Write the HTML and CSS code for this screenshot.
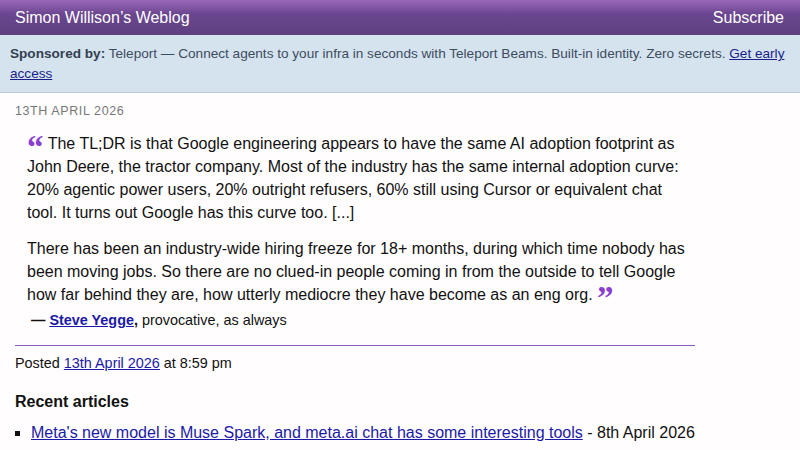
FILE: index.html
```html
<!DOCTYPE html>
<html>
<head>
<meta charset="utf-8">
<link rel="stylesheet" href="styles.css">
</head>
<body>
<header class="smallhead">
  <a class="site-title" href="#">Simon Willison’s Weblog</a>
  <a class="subscribe" href="#">Subscribe</a>
</header>
<div class="sponsor">
  <strong>Sponsored by:</strong> Teleport — Connect agents to your infra in seconds with Teleport Beams. Built-in identity. Zero secrets. <a href="#">Get early access</a>
</div>
<main class="content">
  <div class="date">13th April 2026</div>
  <blockquote class="quote">
    <p><span class="qmark">“</span> The TL;DR is that Google engineering appears to have the same AI adoption footprint as John Deere, the tractor company. Most of the industry has the same internal adoption curve: 20% agentic power users, 20% outright refusers, 60% still using Cursor or equivalent chat tool. It turns out Google has this curve too. [...]</p>
    <p>There has been an industry-wide hiring freeze for 18+ months, during which time nobody has been moving jobs. So there are no clued-in people coming in from the outside to tell Google how far behind they are, how utterly mediocre they have become as an eng org. <span class="qmark">”</span></p>
  </blockquote>
  <p class="cite"><strong>— <a href="#">Steve Yegge</a>,</strong> provocative, as always</p>
  <p class="posted">Posted <a href="#">13th April 2026</a> at 8:59 pm</p>
  <h3 class="recent">Recent articles</h3>
  <ul class="articles">
    <li><a href="#">Meta's new model is Muse Spark, and meta.ai chat has some interesting tools</a> - 8th April 2026</li>
  </ul>
</main>
</body>
</html>
```
FILE: styles.css
```css
html, body {
  margin: 0;
  padding: 0;
}
body {
  background: #fffdfe;
  font-family: "Liberation Sans", Arial, sans-serif;
  color: #111;
}
a {
  color: #1a1aa6;
}
.smallhead {
  height: 35px;
  box-sizing: border-box;
  padding: 0 16px 0 15px;
  display: flex;
  align-items: center;
  justify-content: space-between;
  background: linear-gradient(to bottom, #9b67b9 0px, #6b4690 14px, #5e3f7f 35px);
}
.smallhead a {
  color: #fff;
  text-decoration: none;
  font-size: 16px;
}
.sponsor {
  background: #d5e3ef;
  border-bottom: 1px solid #b8c9da;
  padding: 9px 10px 8px 10px;
  font-size: 13.6px;
  line-height: 20px;
  color: #3d4c5e;
}
.sponsor strong {
  color: #33404f;
}
.sponsor a {
  color: #1a1f8a;
}
.content {
  width: 680px;
  margin: 0 0 0 15px;
  padding-top: 11px;
}
.date {
  text-transform: uppercase;
  font-size: 12.5px;
  letter-spacing: 0.6px;
  color: #777;
  line-height: 14px;
}
.quote {
  margin: 14px 0 0 12px;
  padding: 0;
}
.quote p {
  margin: 0 0 13px 0;
  font-size: 16px;
  line-height: 23px;
  color: #111;
}
.quote p:last-child {
  margin-bottom: 0;
}
.qmark {
  font-family: "Liberation Serif", "Times New Roman", serif;
  font-weight: bold;
  color: #8b3fd1;
  font-size: 33px;
  line-height: 0;
  vertical-align: -9px;
}
.cite {
  margin: 5px 0 0 16px;
  font-size: 14.4px;
  line-height: 18px;
}
.cite a {
  color: #1a1aa6;
}
.posted {
  margin: 16px 0 0 0;
  padding-top: 8px;
  border-top: 1px solid #8e58b6;
  font-size: 14.4px;
  line-height: 18px;
}
.recent {
  margin: 20px 0 0 0;
  font-size: 16px;
  line-height: 20px;
}
.articles {
  margin: 11px 0 0 0;
  padding-left: 16px;
  list-style: square;
  font-size: 16px;
  line-height: 20px;
}
```
